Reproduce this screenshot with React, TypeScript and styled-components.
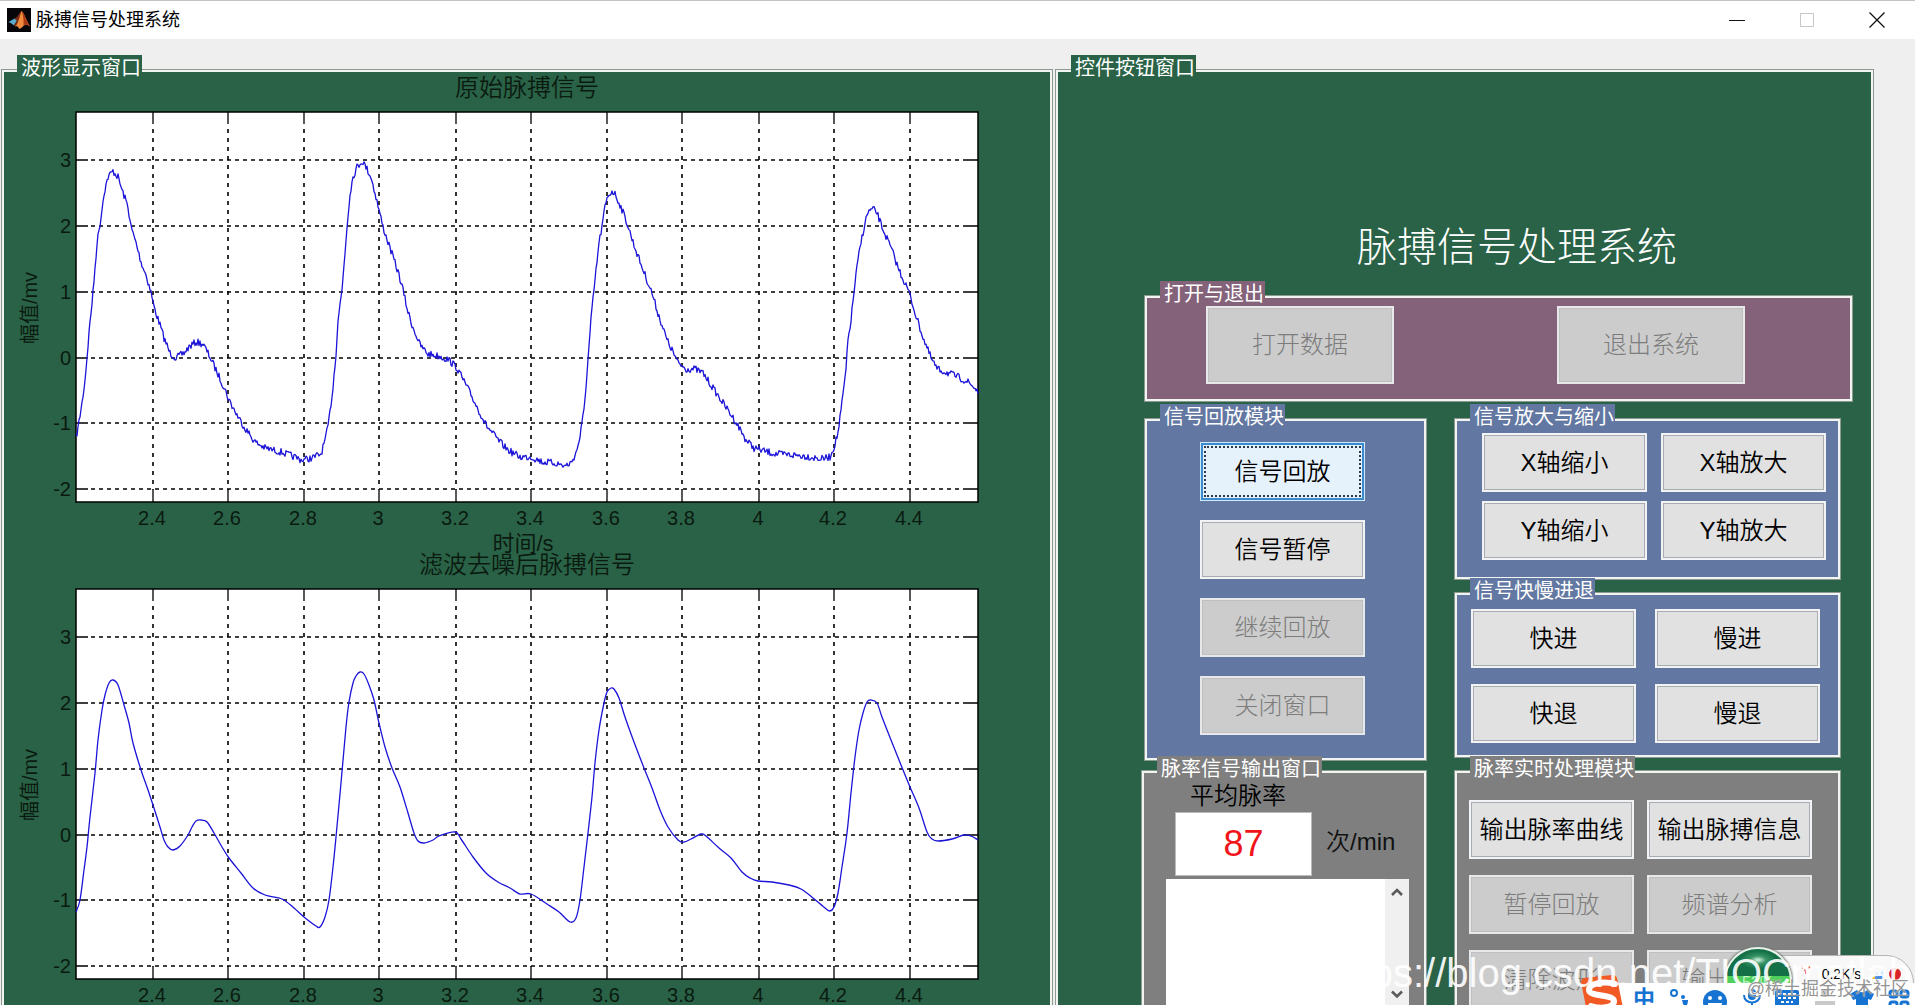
import React from 'react';
import styled, { createGlobalStyle, css } from 'styled-components';

const sans = '"Liberation Sans", "Noto Sans CJK SC", sans-serif';

const color = {
  green: '#296246',
  purple: '#84627a',
  blue: '#6277a1',
  gray: '#7f7f7f',
  face: '#efefef',
  line: '#f2f4f2',
  edge: '#8c9a92',
};

const GlobalStyle = createGlobalStyle`
  *, *::before, *::after { box-sizing: border-box; }
  body {
    margin: 0;
    background: ${color.face};
    font-family: ${sans};
    overflow: hidden;
  }
  h1, h2, h3 { margin: 0; font-weight: 400; }
  button, input, textarea { font-family: inherit; }
`;

/* ---------- window ---------- */

const Window = styled.div`
  position: relative;
  height: 100vh;
  overflow: hidden;
  background: ${color.face};
`;

const TitleBar = styled.header`
  display: flex;
  align-items: center;
  height: 39px;
  padding: 0 3px 0 7px;
  background: #fff;
  border-top: 1px solid #c4c4c8;
`;

const TitleText = styled.h1`
  flex: 1;
  margin-left: 5px;
  font-size: 18px;
  line-height: 24px;
  color: #000;
`;

const WindowButton = styled.button`
  display: flex;
  align-items: center;
  justify-content: center;
  width: 70px;
  height: 36px;
  padding: 0;
  border: 0;
  background: transparent;
  color: #111;

  &:disabled { color: #c8c8c8; }
`;

const Main = styled.main`
  display: grid;
  grid-template-columns: minmax(0, 1052fr) minmax(0, 819fr);
  gap: 2px;
  padding: 30px 41px 0 1px;
`;

/* ---------- etched panels ---------- */

const Panel = styled.section<{ $bg: string }>`
  position: relative;
  border: 1px solid ${color.edge};
  background: ${(p) => p.$bg};
  box-shadow: inset 0 0 0 2px ${color.line};
`;

const Caption = styled.h2<{ $bg: string }>`
  position: absolute;
  top: -15px;
  left: 15px;
  padding: 2px 1px 0 4px;
  background: ${(p) => p.$bg};
  color: #fff;
  font-size: 20px;
  line-height: 22px;
  white-space: nowrap;
`;

const WavePanel = styled(Panel)`
  padding: 2px;
`;

const ControlPanel = styled(Panel)`
  display: flex;
  flex-direction: column;
  padding: 153px 20px 0 85px;
`;

const Heading = styled.h2`
  margin-bottom: 24px;
  padding-left: 40px;
  color: #fff;
  font-size: 40px;
  font-weight: 300;
  line-height: 48px;
  text-align: center;
`;

const Columns = styled.div`
  display: flex;
  gap: 27px;
  margin-top: 16px;
  padding-right: 12px;
`;

const Column = styled.div<{ $grow: number; $gap: number }>`
  display: flex;
  flex: ${(p) => p.$grow} 1 0;
  flex-direction: column;
  gap: ${(p) => p.$gap}px;
  min-width: 0;
`;

const FileGroup = styled(Panel)`
  display: flex;
  justify-content: space-between;
  margin-left: 3px;
  padding: 10px 107px 17px 61px;
`;

const PlaybackGroup = styled(Panel)`
  display: flex;
  flex-direction: column;
  gap: 19px;
  margin-left: 3px;
  padding: 23px 55px 25px;
`;

const PadGroup = styled(Panel)<{ $pad: string; $cols: number; $rows: number }>`
  display: grid;
  grid-template-columns: 165px 165px;
  gap: ${(p) => p.$rows}px ${(p) => p.$cols}px;
  padding: ${(p) => p.$pad};
`;

const OutputGroup = styled(Panel)`
  padding: 9px 17px 20px 24px;
`;

const RateLabel = styled.label`
  display: block;
  padding-left: 24px;
  font-size: 24px;
  font-weight: 350;
  line-height: 32px;
  color: #000;
`;

const RateRow = styled.div`
  display: flex;
  align-items: flex-start;
  gap: 14px;
  padding-left: 9px;
  font-size: 24px;
  font-weight: 350;
  line-height: 59px;
  color: #111;
`;

const RateInput = styled.input`
  width: 137px;
  height: 64px;
  padding: 0;
  border: 1px solid #b9bcbc;
  background: #fff;
  color: #f0141a;
  font-size: 36px;
  text-align: center;
`;

const ListBox = styled.div`
  display: flex;
  height: 128px;
  margin-top: 3px;
  background: #fff;
`;

const ListText = styled.textarea`
  flex: 1;
  min-width: 0;
  border: 0;
  background: #fff;
  resize: none;
  outline: none;
`;

const ScrollBar = styled.div`
  display: flex;
  flex-direction: column;
  justify-content: space-between;
  width: 24px;
  background: #f0f0f0;
`;

const ScrollButton = styled.button`
  height: 26px;
  padding: 0;
  border: 0;
  background: transparent;
  color: #5a5a5a;
`;

const PushButton = styled.button<{ $large?: boolean; $focused?: boolean }>`
  width: ${(p) => (p.$large ? 188 : 165)}px;
  height: ${(p) => (p.$large ? 78 : 59)}px;
  padding: 0;
  border: 2px solid #f1f3f5;
  background: #e1e1e1;
  box-shadow: inset 0 0 0 1px #a9adb2;
  color: #000;
  font-size: 24px;
  font-weight: 350;
  line-height: 30px;
  white-space: nowrap;

  &:disabled {
    border-color: #e6e8ea;
    background: #ccc;
    box-shadow: inset 0 0 0 1px #bfbfc2;
    color: #7c7c7c;
    font-weight: 300;
  }

  ${(p) =>
    p.$focused &&
    css`
      border: 1px solid #cfe8fa;
      background: #e5f1fb;
      box-shadow: inset 0 0 0 2px #3a8ace;
      outline: 2px dotted #2c3a4c;
      outline-offset: -6px;
    `}
`;

/* ---------- charts ---------- */

const ChartTitle = styled.h3`
  color: #0b1a10;
  font-size: 24px;
  font-weight: 350;
  line-height: 32px;
  text-align: center;
`;

const ChartSvg = styled.svg`
  display: block;
  width: 100%;
  height: auto;
  overflow: visible;
  font-family: ${sans};
  font-size: 20px;
  fill: #0b1a10;
`;

type Point = [number, number];

const toPoints = (flat: string): Point[] =>
  flat.trim().split(/\s+/).map((pair) => pair.split(',').map(Number) as Point);

const rawTrace = toPoints(`
76,438 78,428 82,403 85,380 87,357 90,322 93,293 97,243 101,217 104,193 108,177 113,171 118,177 122,190 126,201
128,207 131,227 136,243 141,262 146,275 151,292 154,307 159,322 164,338 170,353 176,358 184,353 189,347 196,342
203,344 210,357 216,370 224,387 229,400 237,415 245,428 255,442 265,448 281,452 292,456 302,460 312,458 321,454
326,437 329,420 333,387 336,353 338,320 342,290 347,227 350,193 353,177 357,167 362,161 366,167 371,177 376,197
379,210 383,227 390,248 399,275 403,290 407,308 411,322 420,345 428,354 439,356 449,360 457,368 467,387 476,405
486,425 498,440 508,450 520,457 531,457 543,462 555,463 565,466 571,463 576,453 580,437 584,410 587,373 589,347
591,320 594,290 599,243 602,227 605,207 608,196 612,191 615,194 621,207 627,223 634,245 642,267 652,293 657,310
661,322 667,340 673,352 678,363 686,369 695,369 703,373 713,388 723,403 736,422 746,440 754,448 764,451 776,454
793,455 805,456 821,459 830,457 834,447 838,433 842,403 846,370 848,340 851,320 855,283 858,260 862,237 865,223
868,212 873,209 877,213 882,227 891,248 899,270 909,292 913,306 918,322 924,340 931,358 937,369 948,373 958,377
968,382 978,391`);

const filteredTrace = toPoints(`
76,912 80,900 84,870 87,847 90,817 95,773 98,740 102,710 105,695 109,683 113,680 118,685 124,705 129,723 133,743
141,770 147,787 153,805 160,827 164,840 168,847 173,850 180,846 188,835 192,827 196,821 201,820 207,822 214,833
222,847 229,858 241,873 253,888 265,895 282,899 294,908 304,917 316,926 320,927 325,917 329,900 333,867 336,837
341,783 346,727 349,702 353,683 356,676 360,672 364,674 369,685 374,700 379,723 385,747 392,768 400,787 408,813
414,833 418,841 424,843 433,840 439,836 455,832 461,839 473,857 486,873 498,882 510,888 520,894 531,894 547,904
559,912 570,922 576,918 580,900 584,867 588,833 592,797 595,763 599,730 604,703 607,692 611,688 614,689 619,698
625,717 634,742 644,768 652,788 660,810 668,827 678,840 684,842 691,839 701,834 706,836 719,848 731,858 742,872
750,878 758,881 772,882 789,885 801,889 813,898 825,908 830,911 834,907 838,893 842,867 847,833 851,793 855,757
859,730 863,713 867,702 871,700 877,703 882,717 891,740 901,765 910,787 919,808 927,832 932,839 938,841 952,839
964,835 971,836 978,840`).map(([x, y]) => [x, y - 477] as Point);

/* Walks the trace one pixel at a time and adds the sensor jitter. */
function jitterPath(points: Point[]): string {
  let seed = 7;
  const next = () => {
    seed = (seed * 16807) % 2147483647;
    return seed / 2147483647 - 0.5;
  };
  const out: string[] = [];
  let i = 0;
  for (let x = points[0][0]; x <= points[points.length - 1][0]; x += 1) {
    while (i < points.length - 2 && points[i + 1][0] < x) i += 1;
    const [x0, y0] = points[i];
    const [x1, y1] = points[i + 1];
    const y = y0 + ((y1 - y0) * (x - x0)) / (x1 - x0);
    out.push(`${x},${(y + next() * 7).toFixed(1)}`);
  }
  return `M${out.join('L')}`;
}

function smoothPath(points: Point[]): string {
  let d = `M${points[0]}`;
  for (let i = 0; i < points.length - 1; i += 1) {
    const p0 = points[Math.max(i - 1, 0)];
    const p1 = points[i];
    const p2 = points[i + 1];
    const p3 = points[Math.min(i + 2, points.length - 1)];
    d += `C${p1[0] + (p2[0] - p0[0]) / 6},${p1[1] + (p2[1] - p0[1]) / 6} ${p2[0] - (p3[0] - p1[0]) / 6},${
      p2[1] - (p3[1] - p1[1]) / 6
    } ${p2[0]},${p2[1]}`;
  }
  return d;
}

const xTicks: [string, number][] = [
  ['2.4', 153], ['2.6', 228], ['2.8', 304], ['3', 379], ['3.2', 456], ['3.4', 531],
  ['3.6', 607], ['3.8', 682], ['4', 759], ['4.2', 834], ['4.4', 910],
];
const yTicks: [string, number][] = [
  ['3', 160], ['2', 226], ['1', 292], ['0', 358], ['-1', 423], ['-2', 489],
];

const LEFT = 76;
const RIGHT = 978;
const TOP = 112;
const BOTTOM = 502;

function Chart({ title, path }: { title: string; path: string }) {
  return (
    <div>
      <ChartTitle>{title}</ChartTitle>
      <ChartSvg viewBox="4 104 1046 445" role="img" aria-label={title}>
        <rect x={LEFT} y={TOP} width={RIGHT - LEFT} height={BOTTOM - TOP} fill="#fff" />
        <g stroke="#000" strokeWidth="1.6" fill="none">
          {xTicks.map(([label, x]) => (
            <g key={label}>
              <path d={`M${x} ${TOP + 17}V${BOTTOM - 12}`} strokeDasharray="4 5" />
              <path d={`M${x} ${TOP}v12M${x} ${BOTTOM}v-12`} strokeWidth="1.3" />
            </g>
          ))}
          {yTicks.map(([label, y]) => (
            <g key={label}>
              <path d={`M${LEFT + 15} ${y}H${RIGHT - 12}`} strokeDasharray="4 4" />
              <path d={`M${LEFT} ${y}h12M${RIGHT} ${y}h-12`} strokeWidth="1.3" />
            </g>
          ))}
          <rect x={LEFT} y={TOP} width={RIGHT - LEFT} height={BOTTOM - TOP} strokeWidth="1.5" />
        </g>
        <path d={path} fill="none" stroke="#1c14d8" strokeWidth="1.3" strokeLinejoin="round" />
        {xTicks.map(([label, x]) => (
          <text key={label} x={x - 1} y="525" textAnchor="middle">{label}</text>
        ))}
        {yTicks.map(([label, y]) => (
          <text key={label} x="71" y={y + 7} textAnchor="end">{label}</text>
        ))}
        <text x="523" y="551" textAnchor="middle" fontSize="22">时间/s</text>
        <text transform="translate(37 308) rotate(-90)" textAnchor="middle">幅值/mv</text>
      </ChartSvg>
    </div>
  );
}

/* ---------- desktop overlays ---------- */

const NetMeter = styled.div`
  position: absolute;
  right: 1px;
  bottom: -6px;
  display: flex;
  align-items: flex-start;
  width: 158px;
  height: 56px;
  padding: 9px 10px 0 43px;
  border: 1px solid #b4b4b4;
  border-radius: 28px;
  background: #f8f8f8;
  font-size: 14px;
  line-height: 18px;
  color: #000;
`;

const NetSpeed = styled.span`
  flex: 1;
  text-align: center;
`;

const Ball = styled.div`
  position: absolute;
  right: 123px;
  bottom: -10px;
  width: 68px;
  height: 68px;
  padding-top: 25px;
  border: 2px solid #e9f3ec;
  border-radius: 50%;
  background:
    radial-gradient(ellipse 18px 9px at 50% 11px, #d9f5e6 0%, rgba(80, 170, 120, 0.6) 45%, transparent 100%),
    linear-gradient(#147047 0 27px, #4fd05c 27px 100%);
  box-shadow: 0 0 2px 1px #6f7a72;
  color: #bdf5c4;
  font-size: 16px;
  line-height: 18px;
  text-align: center;
`;

const ImeBar = styled.div`
  position: absolute;
  right: 0;
  bottom: 0;
  display: flex;
  align-items: flex-start;
  justify-content: space-between;
  width: 300px;
  height: 22px;
  padding: 6px 5px 0 18px;
  background: #fff;
  color: #1673d2;
  overflow: hidden;
`;

const ImeMode = styled.span`
  font-size: 22px;
  font-weight: 700;
  line-height: 20px;
`;

const ImeLogo = styled.svg`
  position: absolute;
  right: 289px;
  bottom: -12px;
`;

const BlogMark = styled.div`
  position: absolute;
  right: 4px;
  bottom: 9px;
  color: rgba(255, 255, 255, 0.92);
  font-size: 40px;
  line-height: 46px;
  white-space: nowrap;
  pointer-events: none;
`;

const CommunityMark = styled.div`
  position: absolute;
  right: 6px;
  bottom: 4px;
  color: rgba(120, 120, 120, 0.8);
  font-size: 18px;
  line-height: 24px;
  text-shadow: 0 0 1px #fff;
  white-space: nowrap;
  pointer-events: none;
`;

function MatlabIcon() {
  return (
    <svg width="24" height="24" viewBox="0 0 24 24" aria-hidden="true">
      <rect width="24" height="24" fill="#06060a" />
      <path d="M1.500 14 7.500 10.500 10 12.500 7 17.500 4.500 15.500Z" fill="#5aa9c8" />
      <path d="M7.500 10.500C10.500 9.500 12 5 14.500 3L12 14 8.500 19 7 17.500 10 12.500Z" fill="#7a2b12" />
      <path d="M14.500 3C17 4.500 19.500 13 23 18.500 20.500 16.500 18.500 16 16.500 18 15 19.500 13.500 20.500 12 21 11.500 18.500 10 18 8.500 18.500 11.500 15 13 7 14.500 3Z" fill="#f08a3c" />
      <path d="M14.500 3C16 6 17 13 16.500 18 18.500 16 20.500 16.500 23 18.500 19.500 13 17 4.500 14.500 3Z" fill="#a83a16" />
    </svg>
  );
}

const Chevron = ({ down }: { down?: boolean }) => (
  <svg width="12" height="9" viewBox="0 0 12 9" aria-hidden="true">
    <path d={down ? 'M1 1.500 6 6.500 11 1.500' : 'M1 7 6 2 11 7'} fill="none" stroke="currentColor" strokeWidth="2.600" />
  </svg>
);

function ImeTools() {
  return (
    <>
      <ImeMode>中</ImeMode>
      <svg width="20" height="22" viewBox="0 0 20 22" fill="currentColor" aria-hidden="true">
        <circle cx="5" cy="4" r="3" fill="none" stroke="currentColor" strokeWidth="2" />
        <circle cx="14" cy="8" r="2" />
        <path d="M13 11h6c0 5-2 7-5 8 1-2 1-3 0-4Z" />
      </svg>
      <svg width="26" height="26" viewBox="0 0 26 26" aria-hidden="true">
        <circle cx="13" cy="13" r="12" fill="currentColor" />
        <circle cx="8" cy="9" r="2" fill="#fff" />
        <circle cx="18" cy="9" r="2" fill="#fff" />
        <path d="M6 14a7 7 0 0 0 14 0Z" fill="#fff" />
      </svg>
      <svg width="20" height="24" viewBox="0 0 20 24" fill="none" stroke="currentColor" strokeWidth="2" aria-hidden="true">
        <rect x="6" y="0" width="8" height="11" rx="4" fill="currentColor" stroke="none" />
        <path d="M2 6c0 10 16 10 16 0M10 13v6" />
      </svg>
      <svg width="24" height="20" viewBox="0 0 24 20" aria-hidden="true">
        <rect width="24" height="18" y="1" rx="2" fill="currentColor" />
        <path d="M3 5h18M3 9h18M6 13h12" stroke="#fff" strokeWidth="2" strokeDasharray="3 2" />
      </svg>
      <svg width="24" height="22" viewBox="0 0 24 22" fill="#c9c9c9" aria-hidden="true">
        <circle cx="12" cy="4" r="4" />
        <path d="M2 20v-8h20v8Z" />
      </svg>
      <svg width="24" height="22" viewBox="0 0 24 22" fill="currentColor" aria-hidden="true">
        <path d="M7 1c2 3 8 3 10 0l7 4-3 6-3-1v12H6V10l-3 1-3-6Z" />
      </svg>
      <svg width="22" height="22" viewBox="0 0 22 22" fill="none" stroke="currentColor" strokeWidth="3" aria-hidden="true">
        <rect x="2" y="2" width="7" height="6" rx="2" />
        <rect x="13" y="2" width="7" height="6" rx="2" />
        <rect x="2" y="13" width="7" height="6" rx="2" />
        <rect x="13" y="13" width="7" height="6" rx="2" />
      </svg>
    </>
  );
}

export default function App() {
  return (
    <Window>
      <GlobalStyle />
      <TitleBar>
        <MatlabIcon />
        <TitleText>脉搏信号处理系统</TitleText>
        <WindowButton aria-label="最小化">
          <svg width="16" height="16" viewBox="0 0 16 16"><path d="M0 8.500h16" stroke="currentColor" /></svg>
        </WindowButton>
        <WindowButton aria-label="最大化" disabled>
          <svg width="16" height="16" viewBox="0 0 16 16"><rect x="1.500" y="1.500" width="13" height="13" fill="none" stroke="currentColor" /></svg>
        </WindowButton>
        <WindowButton aria-label="关闭">
          <svg width="16" height="16" viewBox="0 0 16 16"><path d="m.5.5 15 15m0-15-15 15" stroke="currentColor" strokeWidth="1.300" /></svg>
        </WindowButton>
      </TitleBar>

      <Main>
        <WavePanel $bg={color.green}>
          <Caption $bg={color.green}>波形显示窗口</Caption>
          <Chart title="原始脉搏信号" path={jitterPath(rawTrace)} />
          <Chart title="滤波去噪后脉搏信号" path={smoothPath(filteredTrace)} />
        </WavePanel>

        <ControlPanel $bg={color.green}>
          <Caption $bg={color.green}>控件按钮窗口</Caption>
          <Heading>脉搏信号处理系统</Heading>

          <FileGroup $bg={color.purple}>
            <Caption $bg={color.purple}>打开与退出</Caption>
            <PushButton $large disabled>打开数据</PushButton>
            <PushButton $large disabled>退出系统</PushButton>
          </FileGroup>

          <Columns>
            <Column $grow={286} $gap={9}>
              <PlaybackGroup $bg={color.blue}>
                <Caption $bg={color.blue}>信号回放模块</Caption>
                <PushButton $focused>信号回放</PushButton>
                <PushButton>信号暂停</PushButton>
                <PushButton disabled>继续回放</PushButton>
                <PushButton disabled>关闭窗口</PushButton>
              </PlaybackGroup>
              <OutputGroup $bg={color.gray}>
                <Caption $bg={color.gray}>脉率信号输出窗口</Caption>
                <RateLabel htmlFor="rate">平均脉率</RateLabel>
                <RateRow>
                  <RateInput id="rate" defaultValue="87" />
                  <span>次/min</span>
                </RateRow>
                <ListBox>
                  <ListText aria-label="脉率信号输出" readOnly />
                  <ScrollBar>
                    <ScrollButton aria-label="向上滚动"><Chevron /></ScrollButton>
                    <ScrollButton aria-label="向下滚动"><Chevron down /></ScrollButton>
                  </ScrollBar>
                </ListBox>
              </OutputGroup>
            </Column>

            <Column $grow={387} $gap={12}>
              <PadGroup $bg={color.blue} $pad="14px 0 19px 27px" $cols={14} $rows={9}>
                <Caption $bg={color.blue}>信号放大与缩小</Caption>
                <PushButton>X轴缩小</PushButton>
                <PushButton>X轴放大</PushButton>
                <PushButton>Y轴缩小</PushButton>
                <PushButton>Y轴放大</PushButton>
              </PadGroup>
              <PadGroup $bg={color.blue} $pad="16px 0 14px 16px" $cols={19} $rows={16}>
                <Caption $bg={color.blue}>信号快慢进退</Caption>
                <PushButton>快进</PushButton>
                <PushButton>慢进</PushButton>
                <PushButton>快退</PushButton>
                <PushButton>慢退</PushButton>
              </PadGroup>
              <PadGroup $bg={color.gray} $pad="29px 0 20px 14px" $cols={13} $rows={16}>
                <Caption $bg={color.gray}>脉率实时处理模块</Caption>
                <PushButton>输出脉率曲线</PushButton>
                <PushButton>输出脉搏信息</PushButton>
                <PushButton disabled>暂停回放</PushButton>
                <PushButton disabled>频谱分析</PushButton>
                <PushButton disabled>清除波形</PushButton>
                <PushButton disabled>输出数据</PushButton>
              </PadGroup>
            </Column>
          </Columns>
        </ControlPanel>
      </Main>

      <NetMeter>
        <svg width="12" height="12" viewBox="0 0 12 12" aria-hidden="true">
          <path d="M1 1 6 6 11 1M6 6v5" fill="none" stroke="#f0603c" strokeWidth="2" strokeDasharray="3 2" />
        </svg>
        <NetSpeed>0.2K/s</NetSpeed>
        <svg width="32" height="18" viewBox="0 0 32 18" aria-hidden="true">
          <path d="M1 14 6 8l3 3 4-8v11Z" fill="#4f8be0" />
          <path d="M1 11 4 9v5H1Z" fill="#f2c14a" />
          <circle cx="24" cy="9" r="6" fill="#d8232a" />
        </svg>
      </NetMeter>
      <Ball>52%</Ball>
      <ImeBar><ImeTools /></ImeBar>
      <ImeLogo width="48" height="42" viewBox="0 0 48 42" aria-hidden="true">
        <path d="M3 7Q3 4 6 3L34 0q4 0 5 3l7 35q0 4-4 4H10Z" fill="#f15a24" />
        <path d="M37 9C26 6 11 8 11 15s25 4 25 11-13 8-23 5" fill="none" stroke="#fff" strokeWidth="6" strokeLinecap="round" />
      </ImeLogo>
      <BlogMark>https://blog.csdn.net/TIQCmatlab</BlogMark>
      <CommunityMark>@稀土掘金技术社区</CommunityMark>
    </Window>
  );
}
